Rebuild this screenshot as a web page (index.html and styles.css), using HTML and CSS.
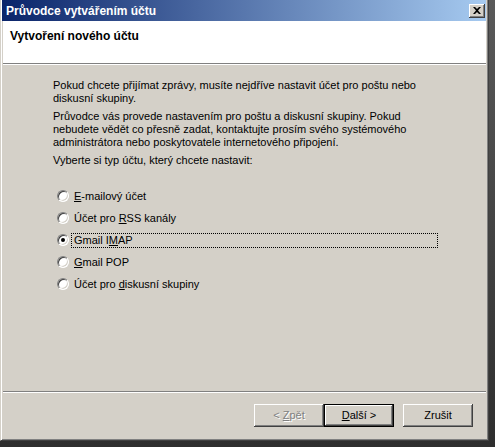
FILE: index.html
```html
<!DOCTYPE html>
<html lang="cs">
<head>
  <meta charset="UTF-8">
  <title>Průvodce vytvářením účtu</title>
  <link rel="stylesheet" href="styles.css">
</head>
<body>
  <div class="window">
    <div class="titlebar">
      <span class="title">Průvodce vytvářením účtu</span>
      <button class="close-btn">
        <svg width="8" height="7" viewBox="0 0 8 7"><path d="M0 0h2l2 2 2-2h2L5 3.5 8 7H6L4 5 2 7H0l3-3.5z" fill="#000"/></svg>
      </button>
    </div>

    <div class="wizard-head">
      <h1>Vytvoření nového účtu</h1>
    </div>

    <div class="wizard-body">
      <p>Pokud chcete přijímat zprávy, musíte nejdříve nastavit účet pro poštu nebo diskusní skupiny.</p>
      <p>Průvodce vás provede nastavením pro poštu a diskusní skupiny. Pokud nebudete vědět co přesně zadat, kontaktujte prosím svého systémového administrátora nebo poskytovatele internetového připojení.</p>
      <p>Vyberte si typ účtu, který chcete nastavit:</p>

      <div class="options">
        <div class="option">
          <span class="radio"></span>
          <span class="label"><u>E</u>-mailový účet</span>
        </div>
        <div class="option">
          <span class="radio"></span>
          <span class="label">Účet pro <u>R</u>SS kanály</span>
        </div>
        <div class="option focused">
          <span class="radio checked"></span>
          <span class="label">Gmail I<u>M</u>AP</span>
        </div>
        <div class="option">
          <span class="radio"></span>
          <span class="label"><u>G</u>mail POP</span>
        </div>
        <div class="option">
          <span class="radio"></span>
          <span class="label">Účet pro <u>d</u>iskusní skupiny</span>
        </div>
      </div>
    </div>

    <div class="wizard-foot">
      <button class="btn disabled">&lt; <u>Z</u>pět</button>
      <button class="btn default"><u>D</u>alší &gt;</button>
      <button class="btn cancel">Zrušit</button>
    </div>
  </div>
</body>
</html>
```

FILE: styles.css
```css
body {
  margin: 0;
  width: 495px;
  height: 447px;
  overflow: hidden;
  background: linear-gradient(#5a5a5a, #2e2e2e);
  font-family: "Liberation Sans", Arial, sans-serif;
  font-size: 11px;
  color: #000;
}
.window {
  box-sizing: border-box;
  width: 489px;
  height: 441px;
  display: flex;
  flex-direction: column;
  background: #d4d0c8;
  border-left: 1px solid #d4d0c8;
  border-right: 1px solid #404040;
  border-bottom: 1px solid #404040;
  box-shadow: inset 1px 0 0 #fff, inset -1px -1px 0 #808080;
  padding: 0 2px 2px 2px;
}
.titlebar {
  height: 21px;
  margin: 0 0 0 -1px;
  display: flex;
  align-items: center;
  justify-content: space-between;
  padding: 0 1px 0 4px;
  background: linear-gradient(to right, #0a246a, #a6caf0);
}
.title {
  color: #fff;
  font-weight: bold;
  font-size: 12px;
}
.close-btn {
  width: 16px;
  height: 14px;
  padding: 0;
  display: flex;
  align-items: center;
  justify-content: center;
  background: #d4d0c8;
  border: none;
  box-shadow: inset -1px -1px 0 #404040, inset 1px 1px 0 #fff, inset -2px -2px 0 #808080;
}
.wizard-head {
  height: 42px;
  background: #fff;
  border-bottom: 1px solid #808080;
  box-shadow: 0 1px 0 #fff;
  padding: 0 7px;
}
.wizard-head h1 {
  margin: 8px 0 0 0;
  font-size: 12px;
  font-weight: bold;
}
.wizard-body {
  flex: 1;
  padding: 15px 40px 0 50px;
  border-bottom: 1px solid #808080;
  box-shadow: 0 1px 0 #fff;
}
.wizard-body p {
  margin: 0 0 5px 0;
  line-height: 13px;
}
.options {
  margin: 18px 8px 0 4px;
}
.option {
  height: 22px;
  display: flex;
  align-items: center;
}
.option .label {
  margin-left: 2px;
  padding: 0 2px;
  line-height: 13px;
  border: 1px solid transparent;
}
.option.focused .label {
  flex: 1;
  border: 1px dotted #000;
}
.radio {
  box-sizing: border-box;
  width: 12px;
  height: 12px;
  border-radius: 50%;
  background: #fff;
  border: 1px solid;
  border-color: #808080 #fff #fff #808080;
  box-shadow: inset 1px 1px 0 #404040, inset -1px -1px 0 #d4d0c8;
  position: relative;
}
.radio.checked::after {
  content: "";
  position: absolute;
  left: 3px;
  top: 3px;
  width: 4px;
  height: 4px;
  border-radius: 50%;
  background: #000;
}
.wizard-foot {
  height: 46px;
  display: flex;
  align-items: center;
  padding: 0 13px 0 0;
  justify-content: flex-end;
}
.btn {
  box-sizing: border-box;
  width: 70px;
  height: 23px;
  font-family: inherit;
  font-size: 11px;
  color: #000;
  background: #d4d0c8;
  border: none;
  padding: 0;
  box-shadow: inset -1px -1px 0 #404040, inset 1px 1px 0 #fff, inset -2px -2px 0 #808080;
}
.btn.default {
  border: 1px solid #000;
}
.btn.cancel {
  margin-left: 9px;
}
.btn.disabled {
  color: #808080;
  text-shadow: 1px 1px 0 #fff;
}
```
